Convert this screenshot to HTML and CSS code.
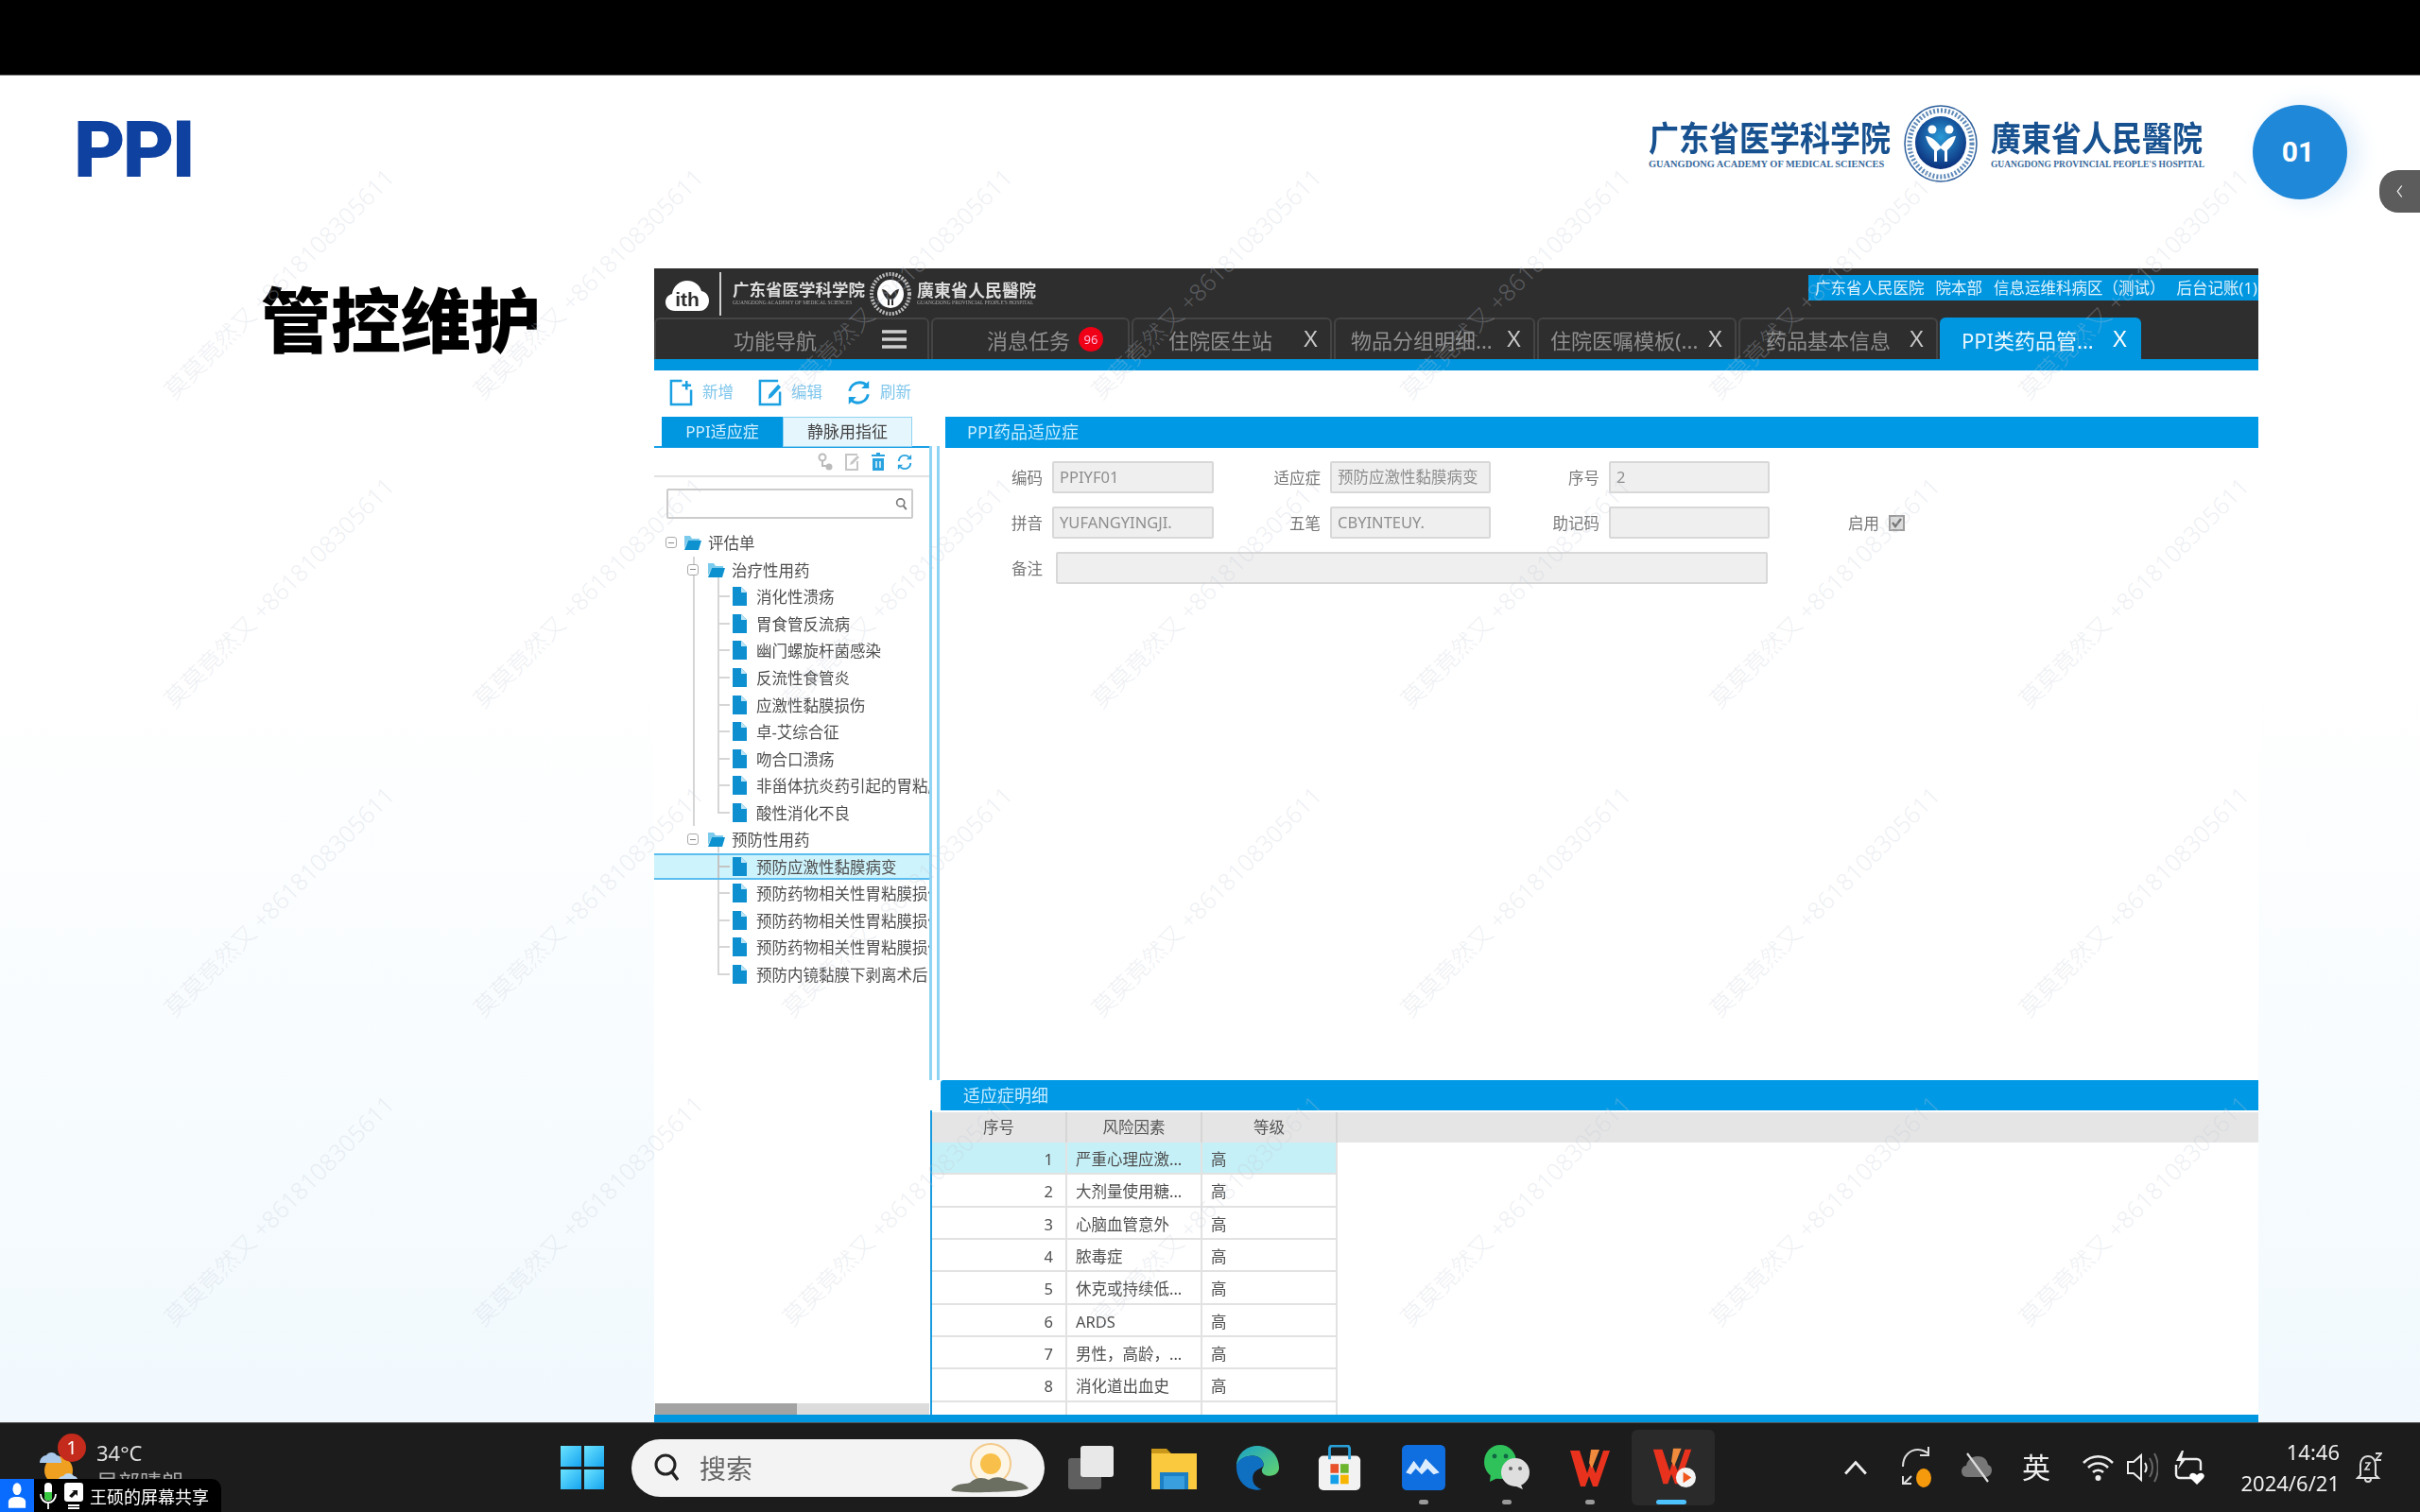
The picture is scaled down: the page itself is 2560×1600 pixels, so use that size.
FILE: index.html
```html
<!DOCTYPE html>
<html lang="zh-CN">
  <head>
    <meta charset="UTF-8" />
    <title>PPI 管控维护</title>
    <link rel="stylesheet" href="styles.css">
  </head>
  <body>
    <!-- 顶部黑边 -->
    <div class="topbar"></div>

    <!-- 幻灯片 -->
    <div class="slide">
      <div class="slide-head">
        <div class="ppi">PPI</div>
        <div class="hospital">
          <div class="hos-name">
            <div class="hos-cn">广东省医学科学院</div>
            <div class="hos-en">GUANGDONG ACADEMY OF MEDICAL SCIENCES</div>
          </div>
          <svg class="emblem" viewBox="0 0 80 84">
            <defs>
              <radialGradient id="emb" cx="50%" cy="40%" r="60%">
                <stop offset="0" stop-color="#2b9bd8" />
                <stop offset="1" stop-color="#0b2f7c" />
              </radialGradient>
            </defs>
            <ellipse cx="40" cy="42" rx="38" ry="40" fill="none" stroke="#2d5f9c" stroke-width="1.5" />
            <ellipse cx="40" cy="42" rx="33" ry="35" fill="none" stroke="#5f8ab8" stroke-width="5" stroke-dasharray="2 2" />
            <ellipse cx="40" cy="41" rx="27" ry="28" fill="url(#emb)" />
            <circle cx="31" cy="27" r="4.5" fill="#fff" />
            <circle cx="49" cy="27" r="4.5" fill="#fff" />
            <path d="M24 34c6 0 11 5 16 11 5-6 10-11 16-11-2 8-6 12-9 15v12h-3V50l-4-3-4 3v11h-3V49c-3-3-7-7-9-15z" fill="#fff" />
          </svg>
          <div class="hos-name">
            <div class="hos-cn hos-tc">廣東省人民醫院</div>
            <div class="hos-en hos-en2">GUANGDONG PROVINCIAL PEOPLE'S HOSPITAL</div>
          </div>
        </div>
        <div class="page-no">01</div>
      </div>

      <!-- 收起按钮 -->
      <div class="handle">
        <svg viewBox="0 0 12 20" width="9" height="15"><path d="M9 2L3 10l6 8" fill="none" stroke="#fff" stroke-width="1.6" /></svg>
      </div>

      <div class="slide-body">
        <div class="slide-title">管控维护</div>

        <!-- 系统截图 -->
        <div class="app">
          <div class="app-top">
            <div class="app-logo">
              <svg class="cloud" viewBox="0 0 46 34">
                <path d="M10 33C4 33 0 29 0 24c0-5 3-8 7-9 1-8 8-14 16-14 7 0 13 4 15 11 5 1 8 5 8 10 0 6-4 11-10 11z" fill="#fff" />
                <text x="23" y="28" text-anchor="middle" font-size="21" font-weight="700" font-family="Liberation Sans" fill="#2e2e2e">ith</text>
              </svg>
              <div class="logo-sep"></div>
              <div class="logo-name">
                <div class="logo-cn">广东省医学科学院</div>
                <div class="logo-en">GUANGDONG ACADEMY OF MEDICAL SCIENCES</div>
              </div>
              <svg class="logo-emb" viewBox="0 0 44 46">
                <ellipse cx="22" cy="23" rx="20" ry="21" fill="none" stroke="#bbb" stroke-width="4" stroke-dasharray="2 1.5" />
                <ellipse cx="22" cy="23" rx="14" ry="15" fill="#fff" />
                <path d="M13 18c4 0 7 4 9 7 2-3 5-7 9-7-1 6-4 9-6 11v6h-2v-6l-1-1-1 1v6h-2v-6c-2-2-5-5-6-11z" fill="#2e2e2e" />
              </svg>
              <div class="logo-name">
                <div class="logo-cn logo-tc">廣東省人民醫院</div>
                <div class="logo-en">GUANGDONG PROVINCIAL PEOPLE'S HOSPITAL</div>
              </div>
            </div>
            <div class="app-user">
              <span>广东省人民医院</span><span>院本部</span><span>信息运维科病区（测试）</span><span>后台记账(1)</span>
            </div>
          </div>

          <div class="tabs">
            <div class="tab tab-nav">
              <span>功能导航</span>
              <svg class="burger" viewBox="0 0 26 20"><path d="M0 2h26M0 10h26M0 18h26" stroke="#cfcfcf" stroke-width="3.4" /></svg>
            </div>
            <div class="tab tab-msg"><span>消息任务</span><span class="badge">96</span></div>
            <div class="tab tab-doc"><span>住院医生站</span><span class="close">X</span></div>
            <div class="tab tab-goods"><span>物品分组明细...</span><span class="close">X</span></div>
            <div class="tab tab-tpl"><span>住院医嘱模板(...</span><span class="close">X</span></div>
            <div class="tab tab-drug"><span>药品基本信息</span><span class="close">X</span></div>
            <div class="tab tab-ppi on"><span>PPI类药品管...</span><span class="close">X</span></div>
          </div>
          <div class="app-line"></div>

          <div class="toolbar">
            <div class="tool">
              <svg viewBox="0 0 26 30"><path d="M14 2H2v26h22V12M19 2v10M14 7h10" fill="none" stroke="#1ba0e2" stroke-width="2.6" /></svg>
              <span>新增</span>
            </div>
            <div class="tool">
              <svg viewBox="0 0 26 30"><path d="M22 2H2v26h22V14" fill="none" stroke="#1ba0e2" stroke-width="2.6" /><path d="M11 22l1-5 10-11 3 3-10 11z" fill="#1ba0e2" /></svg>
              <span>编辑</span>
            </div>
            <div class="tool">
              <svg viewBox="0 0 28 30"><path d="M3 13C4 7 9 3 15 3c3 0 6 1 8 3M25 17c-1 6-6 10-12 10-3 0-6-1-8-3" fill="none" stroke="#1ba0e2" stroke-width="3.2" /><path d="M26 1v9h-9zM2 29v-9h9z" fill="#1ba0e2" /></svg>
              <span>刷新</span>
            </div>
          </div>

          <div class="main">
            <!-- 左侧树 -->
            <div class="left">
              <div class="left-tabs">
                <div class="ltab on">PPI适应症</div>
                <div class="ltab">静脉用指征</div>
              </div>
              <div class="tree-tools">
                <svg viewBox="0 0 16 20"><circle cx="5" cy="5" r="3.5" fill="none" stroke="#bbb" stroke-width="2" /><path d="M5 9v5h5" fill="none" stroke="#bbb" stroke-width="2" /><circle cx="12" cy="15" r="3.5" fill="#bbb" /></svg>
                <svg viewBox="0 0 16 20"><path d="M14 2H2v16h12V9" fill="none" stroke="#c6c6c6" stroke-width="2" /><path d="M6 13l1-3 7-7 2 2-7 7z" fill="#c6c6c6" /></svg>
                <svg viewBox="0 0 16 20"><path d="M2 6h12v13H2z" fill="#29a3df" /><path d="M1 3h14M6 1h4" stroke="#29a3df" stroke-width="2" /><path d="M6 9v7M10 9v7" stroke="#fff" stroke-width="1.4" /></svg>
                <svg viewBox="0 0 18 20"><path d="M2 9c0-4 3-7 7-7 2 0 3.500.5 5 2M16 11c0 4-3 7-7 7-2 0-3.500-.5-5-2" fill="none" stroke="#29a3df" stroke-width="2.2" /><path d="M17 1v6h-6zM1 19v-6h6z" fill="#29a3df" /></svg>
              </div>
              <div class="tree-search">
                <svg viewBox="0 0 16 18" width="13" height="15"><circle cx="7" cy="7" r="5" fill="none" stroke="#777" stroke-width="2" /><path d="M10.500 11l4 5" stroke="#777" stroke-width="2.4" /></svg>
              </div>
              <div class="tree">
                <div class="row r0"><i class="exp"></i><svg class="folder" viewBox="0 0 18 18"><path d="M0 2h6l2 3h8v2H4L0 15z" fill="#7ccbec" /><path d="M4 7h14l-3 10H0z" fill="#0e92cf" /></svg><span>评估单</span></div>
                <div class="row r1 trunk"><i class="exp"></i><svg class="folder" viewBox="0 0 18 18"><path d="M0 2h6l2 3h8v2H4L0 15z" fill="#7ccbec" /><path d="M4 7h14l-3 10H0z" fill="#0e92cf" /></svg><span>治疗性用药</span></div>
                <div class="row r2 trunk"><svg class="file" viewBox="0 0 15 20"><path d="M0 0h9l6 6v14H0z" fill="#0e8fd0" /><path d="M9 0l6 6H9z" fill="#bfe6f7" /></svg><span>消化性溃疡</span></div>
                <div class="row r2 trunk"><svg class="file" viewBox="0 0 15 20"><path d="M0 0h9l6 6v14H0z" fill="#0e8fd0" /><path d="M9 0l6 6H9z" fill="#bfe6f7" /></svg><span>胃食管反流病</span></div>
                <div class="row r2 trunk"><svg class="file" viewBox="0 0 15 20"><path d="M0 0h9l6 6v14H0z" fill="#0e8fd0" /><path d="M9 0l6 6H9z" fill="#bfe6f7" /></svg><span>幽门螺旋杆菌感染</span></div>
                <div class="row r2 trunk"><svg class="file" viewBox="0 0 15 20"><path d="M0 0h9l6 6v14H0z" fill="#0e8fd0" /><path d="M9 0l6 6H9z" fill="#bfe6f7" /></svg><span>反流性食管炎</span></div>
                <div class="row r2 trunk"><svg class="file" viewBox="0 0 15 20"><path d="M0 0h9l6 6v14H0z" fill="#0e8fd0" /><path d="M9 0l6 6H9z" fill="#bfe6f7" /></svg><span>应激性黏膜损伤</span></div>
                <div class="row r2 trunk"><svg class="file" viewBox="0 0 15 20"><path d="M0 0h9l6 6v14H0z" fill="#0e8fd0" /><path d="M9 0l6 6H9z" fill="#bfe6f7" /></svg><span>卓-艾综合征</span></div>
                <div class="row r2 trunk"><svg class="file" viewBox="0 0 15 20"><path d="M0 0h9l6 6v14H0z" fill="#0e8fd0" /><path d="M9 0l6 6H9z" fill="#bfe6f7" /></svg><span>吻合口溃疡</span></div>
                <div class="row r2 trunk"><svg class="file" viewBox="0 0 15 20"><path d="M0 0h9l6 6v14H0z" fill="#0e8fd0" /><path d="M9 0l6 6H9z" fill="#bfe6f7" /></svg><span>非甾体抗炎药引起的胃粘膜损伤</span></div>
                <div class="row r2 trunk last"><svg class="file" viewBox="0 0 15 20"><path d="M0 0h9l6 6v14H0z" fill="#0e8fd0" /><path d="M9 0l6 6H9z" fill="#bfe6f7" /></svg><span>酸性消化不良</span></div>
                <div class="row r1"><i class="exp"></i><svg class="folder" viewBox="0 0 18 18"><path d="M0 2h6l2 3h8v2H4L0 15z" fill="#7ccbec" /><path d="M4 7h14l-3 10H0z" fill="#0e92cf" /></svg><span>预防性用药</span></div>
                <div class="row r2 sel"><svg class="file" viewBox="0 0 15 20"><path d="M0 0h9l6 6v14H0z" fill="#0e8fd0" /><path d="M9 0l6 6H9z" fill="#bfe6f7" /></svg><span>预防应激性黏膜病变</span></div>
                <div class="row r2"><svg class="file" viewBox="0 0 15 20"><path d="M0 0h9l6 6v14H0z" fill="#0e8fd0" /><path d="M9 0l6 6H9z" fill="#bfe6f7" /></svg><span>预防药物相关性胃粘膜损伤</span></div>
                <div class="row r2"><svg class="file" viewBox="0 0 15 20"><path d="M0 0h9l6 6v14H0z" fill="#0e8fd0" /><path d="M9 0l6 6H9z" fill="#bfe6f7" /></svg><span>预防药物相关性胃粘膜损伤</span></div>
                <div class="row r2"><svg class="file" viewBox="0 0 15 20"><path d="M0 0h9l6 6v14H0z" fill="#0e8fd0" /><path d="M9 0l6 6H9z" fill="#bfe6f7" /></svg><span>预防药物相关性胃粘膜损伤</span></div>
                <div class="row r2 last"><svg class="file" viewBox="0 0 15 20"><path d="M0 0h9l6 6v14H0z" fill="#0e8fd0" /><path d="M9 0l6 6H9z" fill="#bfe6f7" /></svg><span>预防内镜黏膜下剥离术后</span></div>
              </div>
              <div class="hscroll"><div class="hthumb"></div></div>
            </div>

            <!-- 右侧 -->
            <div class="right">
              <div class="right-top">
                <div class="sash"></div>
                <div class="panel">
                  <div class="panel-bar">PPI药品适应症</div>
                  <div class="form">
                    <label>编码</label><div class="inp">PPIYF01</div>
                    <label>适应症</label><div class="inp">预防应激性黏膜病变</div>
                    <label>序号</label><div class="inp">2</div>
                    <div></div><div></div>
                    <label>拼音</label><div class="inp">YUFANGYINGJI.</div>
                    <label>五笔</label><div class="inp">CBYINTEUY.</div>
                    <label>助记码</label><div class="inp"></div>
                    <label>启用</label>
                    <svg class="check" viewBox="0 0 17 17"><rect width="17" height="17" fill="#9c9c9c" /><rect x="2" y="2" width="13" height="13" fill="#dcdcdc" /><path d="M4 8l3 4 6-8" fill="none" stroke="#777" stroke-width="2.4" /></svg>
                    <label>备注</label><div class="inp wide"></div>
                  </div>
                </div>
              </div>
              <div class="right-bot">
                <div class="bot-bar">适应症明细</div>
                <div class="grid-wrap">
                  <div class="grid-head"><div>序号</div><div>风险因素</div><div>等级</div></div>
                  <div class="grid-row on"><div class="num">1</div><div>严重心理应激...</div><div>高</div></div>
                  <div class="grid-row"><div class="num">2</div><div>大剂量使用糖...</div><div>高</div></div>
                  <div class="grid-row"><div class="num">3</div><div>心脑血管意外</div><div>高</div></div>
                  <div class="grid-row"><div class="num">4</div><div>脓毒症</div><div>高</div></div>
                  <div class="grid-row"><div class="num">5</div><div>休克或持续低...</div><div>高</div></div>
                  <div class="grid-row"><div class="num">6</div><div>ARDS</div><div>高</div></div>
                  <div class="grid-row"><div class="num">7</div><div>男性，高龄，...</div><div>高</div></div>
                  <div class="grid-row"><div class="num">8</div><div>消化道出血史</div><div>高</div></div>
                  <div class="grid-row"><div class="num"></div><div></div><div></div></div>
                </div>
              </div>
            </div>
          </div>
          <div class="app-foot"></div>
        </div>
      </div>

      <!-- 水印 -->
      <div class="marks">
        <span>莫莫竟然又 +8618108305611</span><span>莫莫竟然又 +8618108305611</span><span>莫莫竟然又 +8618108305611</span><span>莫莫竟然又 +8618108305611</span><span>莫莫竟然又 +8618108305611</span><span>莫莫竟然又 +8618108305611</span><span>莫莫竟然又 +8618108305611</span>
        <span>莫莫竟然又 +8618108305611</span><span>莫莫竟然又 +8618108305611</span><span>莫莫竟然又 +8618108305611</span><span>莫莫竟然又 +8618108305611</span><span>莫莫竟然又 +8618108305611</span><span>莫莫竟然又 +8618108305611</span><span>莫莫竟然又 +8618108305611</span>
        <span>莫莫竟然又 +8618108305611</span><span>莫莫竟然又 +8618108305611</span><span>莫莫竟然又 +8618108305611</span><span>莫莫竟然又 +8618108305611</span><span>莫莫竟然又 +8618108305611</span><span>莫莫竟然又 +8618108305611</span><span>莫莫竟然又 +8618108305611</span>
        <span>莫莫竟然又 +8618108305611</span><span>莫莫竟然又 +8618108305611</span><span>莫莫竟然又 +8618108305611</span><span>莫莫竟然又 +8618108305611</span><span>莫莫竟然又 +8618108305611</span><span>莫莫竟然又 +8618108305611</span><span>莫莫竟然又 +8618108305611</span>
      </div>
    </div>

    <!-- 任务栏 -->
    <div class="taskbar">
      <div class="weather">
        <svg class="wx" viewBox="0 0 46 56">
          <circle cx="24" cy="32" r="15" fill="#f0a020" />
          <path d="M4 24c0-5 4-8 7-8 2-4 9-4 11 0 3 0 5 3 5 8z" fill="#a9c8ea" />
          <path d="M22 46c0-5 4-8 7-8 2-4 9-4 11 0 3 0 5 3 5 8z" fill="#bcd6f0" />
        </svg>
        <div class="wx-text">
          <div>34°C</div>
          <div class="wx-sub">局部晴朗</div>
        </div>
        <div class="wx-badge">1</div>
      </div>
      <div class="win-slot">
        <div class="win-logo"><i></i><i></i><i></i><i></i></div>
      </div>
      <div class="search">
        <svg class="search-ico" viewBox="0 0 26 30"><circle cx="12" cy="12" r="10" fill="none" stroke="#222" stroke-width="3" /><path d="M19 20l6 8" stroke="#222" stroke-width="3.500" /></svg>
        <span>搜索</span>
        <svg class="search-pic" viewBox="0 0 88 56">
          <circle cx="44" cy="24" r="21" fill="#fdf6e6" stroke="#f3c98a" stroke-width="2" />
          <circle cx="44" cy="24" r="11" fill="#f8c04a" />
          <path d="M2 52c6-8 14-6 20-8 6-6 14-6 20-3 8-5 16-2 20 1 8 0 18 2 22 8-8 4-74 6-82 2z" fill="#6b6f62" />
        </svg>
      </div>
      <div class="apps">
        <div class="app-slot">
          <svg viewBox="0 0 48 46"><rect y="13" width="35" height="33" rx="3" fill="#5f5f5f" /><rect x="13" width="35" height="33" rx="3" fill="#e8e8e8" /></svg>
        </div>
        <div class="app-slot">
          <svg viewBox="0 0 48 46"><path d="M0 3h16l5 5h27v38H0z" fill="#c9981a" /><path d="M0 8h48v38H0z" fill="#fbc93d" /><path d="M9 28h30v18H9z" fill="#1d7fc4" /><path d="M13 32h22v14H13z" fill="#3a9fdf" /></svg>
        </div>
        <div class="app-slot">
          <svg viewBox="0 0 48 50">
            <defs>
              <linearGradient id="edgeA" x1="0" y1="0" x2="1" y2="1"><stop offset="0" stop-color="#1aa1c9" /><stop offset="1" stop-color="#62d36c" /></linearGradient>
            </defs>
            <path d="M24 1c13 0 24 10 24 24 0 6-5 9-10 9-5 0-9-2-9-6 0-2 2-3 2-6 0-5-5-10-12-10C10 12 3 17 1 24 1 11 11 1 24 1z" fill="url(#edgeA)" />
            <path d="M1 24c0-7 8-12 18-12 7 0 12 5 12 10 0 2-2 3-4 4-5 2-8 5-8 11 0 6 4 10 10 12-4 1-7 1-10 0C8 47 1 36 1 24z" fill="#0f6fc0" />
          </svg>
        </div>
        <div class="app-slot">
          <svg viewBox="0 0 48 50"><rect y="12" width="46" height="38" rx="5" fill="#f2f2f2" /><path d="M12 16V4a3 3 0 0 1 3-3h16a3 3 0 0 1 3 3v12" fill="none" stroke="#2a9fd8" stroke-width="3" /><rect x="13" y="21" width="9" height="10" fill="#e8512a" /><rect x="24" y="21" width="9" height="10" fill="#6cb52d" /><rect x="13" y="33" width="9" height="10" fill="#14a0e8" /><rect x="24" y="33" width="9" height="10" fill="#f7b500" /></svg>
        </div>
        <div class="app-slot">
          <svg viewBox="0 0 44 46"><rect width="44" height="46" rx="5" fill="#106fe0" /><path d="M4 28l8-12 6 8 6-10 14 14-6 2-6-6-6 6-6-6-5 6z" fill="#dcecff" /></svg>
          <i class="dot"></i>
        </div>
        <div class="app-slot">
          <svg viewBox="0 0 48 48"><ellipse cx="17" cy="18" rx="17" ry="18" fill="#2fc25b" /><path d="M7 30l-1 9 10-5z" fill="#2fc25b" /><circle cx="11" cy="12" r="2.400" fill="#164" /><circle cx="23" cy="12" r="2.400" fill="#164" /><ellipse cx="33" cy="29" rx="15" ry="15" fill="#dedede" /><path d="M38 40l3 7-9-4z" fill="#dedede" /><circle cx="28" cy="25" r="2" fill="#666" /><circle cx="38" cy="25" r="2" fill="#666" /></svg>
          <i class="dot"></i>
        </div>
        <div class="app-slot">
          <svg viewBox="0 0 48 44"><path d="M3 4h10l8 24 4-12 5 12 8-24h7L32 42h-5l-4-11-4 11h-5z" fill="#e8321d" /><path d="M25 3h9l-8 20-3-6z" fill="#f08a3c" /></svg>
          <i class="dot"></i>
        </div>
        <div class="app-slot active">
          <svg viewBox="0 0 50 48"><path d="M3 4h10l8 24 4-12 5 12 8-24h7L32 42h-5l-4-11-4 11h-5z" fill="#e8321d" /><path d="M25 3h9l-8 20-3-6z" fill="#f08a3c" /><circle cx="39" cy="35" r="11" fill="#f4f4f4" /><path d="M36 29l9 6-9 6z" fill="#f0561d" /></svg>
          <i class="dot cur"></i>
        </div>
      </div>
      <div class="tray">
        <svg class="t-chev" viewBox="0 0 24 16"><path d="M2 14L12 3l10 11" fill="none" stroke="#eee" stroke-width="2.600" /></svg>
        <svg class="t-sync" viewBox="0 0 32 46"><path d="M2 22C2 10 10 4 18 4c4 0 8 2 11 4M2 32v8h9M3 40l8-8" fill="none" stroke="#ddd" stroke-width="2" /><path d="M29 1v9h-9" fill="none" stroke="#ddd" stroke-width="2" /><ellipse cx="24" cy="34" rx="8" ry="10" fill="#f59a0c" /></svg>
        <svg class="t-cloud" viewBox="0 0 32 32"><path d="M6 26C2 26 0 23 0 20s2-6 5-6c1-6 6-10 12-10s10 3 11 9c3 1 4 3 4 6 0 4-3 7-7 7z" fill="#777" /><path d="M6 1l22 30" stroke="#ddd" stroke-width="2.200" /></svg>
        <div class="t-lang">英</div>
        <svg class="t-wifi" viewBox="0 0 33 32"><path d="M1 11c9-9 22-9 31 0M6 16c6-6 15-6 21 0M11 21c3-3 8-3 11 0" fill="none" stroke="#eee" stroke-width="2.600" /><circle cx="16.500" cy="27" r="3" fill="#eee" /></svg>
        <svg class="t-vol" viewBox="0 0 33 36"><path d="M1 12h6l8-7v26l-8-7H1z" fill="none" stroke="#eee" stroke-width="2" /><path d="M19 13c2 3 2 7 0 10" fill="none" stroke="#eee" stroke-width="2" /><path d="M24 8c4 6 4 14 0 20M29 3c5 9 5 21 0 30" fill="none" stroke="#666" stroke-width="2" /></svg>
        <svg class="t-batt" viewBox="0 0 34 38"><path d="M8 10h18a4 4 0 0 1 4 4v8M26 30H8a4 4 0 0 1-4-4V16" fill="none" stroke="#eee" stroke-width="2.400" /><path d="M10 1L4 12h5l-3 9 9-12h-5l2-8z" fill="#eee" /><path d="M26 37l-7-7c-3-4 3-8 7-3 4-5 10-1 7 3z" fill="#fff" /></svg>
        <div class="clock"><div>14:46</div><div>2024/6/21</div></div>
        <svg class="t-bell" viewBox="0 0 29 34"><path d="M6 25V14c0-5 3-9 8-9s8 4 8 9v11l3 3H3z" fill="none" stroke="#ddd" stroke-width="2" /><path d="M11 29c0 4 6 4 6 0" fill="none" stroke="#ddd" stroke-width="2" /><path d="M11 12h5l-5 7h5" fill="none" stroke="#ddd" stroke-width="1.600" /><path d="M22 2h6l-6 7h6" fill="none" stroke="#ddd" stroke-width="1.800" /></svg>
      </div>

      <!-- 屏幕共享条 -->
      <div class="share">
        <div class="share-user">
          <svg viewBox="0 0 22 32" width="20" height="30"><ellipse cx="11" cy="8" rx="5" ry="7" fill="#fff" /><path d="M1 30v-7c0-4 4-6 10-6s10 2 10 6v7z" fill="#fff" /></svg>
        </div>
        <svg class="share-mic" viewBox="0 0 20 30"><rect x="6" y="1" width="8" height="19" rx="4" fill="#fff" /><path d="M6 11h8v5a4 4 0 0 1-8 0z" fill="#38c940" /><path d="M2 13c0 12 16 12 16 0M10 23v6" fill="none" stroke="#fff" stroke-width="1.800" /></svg>
        <svg class="share-scr" viewBox="0 0 22 30"><rect x="1" y="1" width="20" height="20" rx="3" fill="#fff" /><path d="M6 15l5-5-2-1h6v6l-2-2-4 4z" fill="#111" /><path d="M5 25h12M5 28h12" stroke="#fff" stroke-width="2" /></svg>
        <span>王硕的屏幕共享</span>
      </div>
    </div>
  </body>
</html>
```

FILE: styles.css
```css
* {
  margin: 0;
  padding: 0;
  box-sizing: border-box;
}

body {
  width: 2560px;
  height: 1600px;
  display: flex;
  flex-direction: column;
  overflow: hidden;
  background: #000;
  font-family: "Noto Sans", "Noto Sans CJK SC", sans-serif;
}

.topbar {
  height: 80px;
  background: #000;
  border-bottom: 1px solid #777;
}

/* 幻灯片 */
.slide {
  height: 1425px;
  position: relative;
  overflow: hidden;
  background: linear-gradient(#fff 45%, #f1f9fe 100%);
}

.slide-head {
  height: 204px;
  display: flex;
  align-items: flex-start;
  padding-left: 78px;
}

.ppi {
  margin-top: 38px;
  font-family: Roboto, sans-serif;
  font-size: 84px;
  line-height: 82px;
  font-weight: 900;
  letter-spacing: -3px;
  color: #0f41a0;
}

.hospital {
  margin-left: auto;
  margin-top: 30px;
  display: flex;
  align-items: center;
}

.hos-cn {
  font-family: "Noto Sans CJK SC", sans-serif;
  font-size: 32px;
  line-height: 40px;
  font-weight: 700;
  color: #17518f;
  white-space: nowrap;
  transform: scaleY(1.15);
}

.hos-tc {
  font-family: "Noto Sans CJK TC", sans-serif;
  letter-spacing: 0;
}

.hos-en {
  margin-top: 4px;
  font-family: "Liberation Serif", serif;
  font-size: 10.400px;
  line-height: 12px;
  font-weight: 700;
  color: #3a6a9c;
  white-space: nowrap;
}

.hos-en2 {
  font-size: 9.500px;
}

.emblem {
  width: 80px;
  height: 84px;
  margin: 0 13px;
}

.page-no {
  width: 100px;
  height: 100px;
  margin: 31px 77px 0 51px;
  border-radius: 50%;
  background: #2088d8;
  box-shadow: 10px 0 26px #dcecfb;
  color: #fff;
  font-family: Roboto, sans-serif;
  font-size: 30px;
  font-weight: 700;
  line-height: 100px;
  text-indent: -4px;
  text-align: center;
}

.handle {
  position: absolute;
  right: 0;
  top: 100px;
  width: 43px;
  height: 45px;
  background: #5c5c5c;
  border-radius: 20px 0 0 20px;
  display: flex;
  align-items: center;
  justify-content: center;
}

.slide-body {
  height: 1221px;
  display: flex;
}

.slide-title {
  width: 692px;
  padding: 7px 0 0 276px;
  font-family: "Noto Sans CJK SC", sans-serif;
  font-size: 74px;
  line-height: 88px;
  font-weight: 900;
  color: #000;
}

/* 系统截图 */
.app {
  width: 1697px;
  height: 1221px;
  display: flex;
  flex-direction: column;
  background: #fff;
  filter: blur(0.7px);
}

.app-top {
  height: 52px;
  background: #2e2e2e;
  display: flex;
  align-items: flex-start;
  justify-content: space-between;
}

.app-logo {
  display: flex;
  align-items: flex-start;
  padding: 12px 0 0 12px;
  color: #ddd;
}

.cloud {
  width: 46px;
  height: 34px;
}

.logo-sep {
  width: 2px;
  height: 46px;
  margin: -8px 12px 0 11px;
  background: #cfcfcf;
}

.logo-name {
  width: 140px;
}

.logo-cn {
  font-family: "Noto Sans CJK SC", sans-serif;
  font-size: 17.500px;
  line-height: 20px;
  font-weight: 700;
  white-space: nowrap;
}

.logo-tc {
  font-family: "Noto Sans CJK TC", sans-serif;
  font-size: 18px;
}

.logo-en {
  font-family: "Liberation Serif", serif;
  font-size: 5.500px;
  line-height: 8px;
  color: #aaa;
  white-space: nowrap;
  overflow: hidden;
}

.logo-emb {
  width: 44px;
  height: 46px;
  margin: -8px 6px 0 5px;
}

.app-user {
  width: 476px;
  height: 27px;
  margin-top: 7px;
  padding-left: 7px;
  background: #0096e0;
  color: #dff3fd;
  font-size: 16.500px;
  line-height: 27px;
  display: flex;
  gap: 12px;
  white-space: nowrap;
  overflow: hidden;
}

.tabs {
  height: 44px;
  background: #2e2e2e;
  display: flex;
  gap: 2px;
  color: #8f8f8f;
  font-size: 22px;
}

.tab {
  height: 44px;
  border: 2px solid #444;
  border-bottom: 0;
  border-radius: 6px 6px 0 0;
  display: flex;
  align-items: center;
  white-space: nowrap;
}

.close {
  margin-left: auto;
  font-family: "Liberation Sans", sans-serif;
  font-size: 23px;
  color: #c8c8c8;
}

.tab-nav {
  width: 291px;
  padding-left: 82px;
}

.burger {
  width: 26px;
  height: 20px;
  margin-left: 69px;
}

.tab-msg {
  width: 210px;
  padding-left: 57px;
}

.badge {
  width: 26px;
  height: 26px;
  margin-left: 9px;
  border-radius: 50%;
  background: #f00016;
  color: #fbd;
  font-size: 13px;
  line-height: 26px;
  text-align: center;
}

.tab-doc {
  width: 212px;
  padding: 0 13px 0 37px;
}

.tab-goods {
  width: 213px;
  padding: 0 13px 0 16px;
}

.tab-tpl {
  width: 211px;
  padding: 0 13px 0 12px;
}

.tab-drug {
  width: 211px;
  padding: 0 13px 0 27px;
}

.tab-ppi {
  width: 213px;
  padding: 0 13px 0 21px;
}

.tab.on {
  background: #0096e0;
  border-color: #0096e0;
  color: #e8f7ff;
}

.tab.on .close {
  color: #fff;
}

.app-line {
  height: 12px;
  background: #0096e0;
}

.toolbar {
  height: 49px;
  padding: 9px 0 0 16px;
  display: flex;
  color: #7fc6ec;
  font-size: 16.500px;
}

.tool {
  display: flex;
  align-items: flex-start;
  width: 94px;
  line-height: 28px;
}

.tool svg {
  width: 25px;
  height: 29px;
  margin-right: 10px;
}

.main {
  flex: 1;
  display: flex;
  min-height: 0;
}

/* 左侧树 */
.left {
  width: 291px;
  display: flex;
  flex-direction: column;
}

.left-tabs {
  height: 33px;
  padding-left: 8px;
  display: flex;
  border-bottom: 2px solid #1aa0e6;
}

.ltab {
  width: 137px;
  height: 32px;
  background: #e6f6fd;
  border: 1px solid #8fd2f3;
  color: #444;
  font-size: 17px;
  line-height: 30px;
  text-align: center;
}

.ltab.on {
  width: 128px;
  background: #0096e0;
  border-color: #0096e0;
  color: #d4f0ff;
}

.tree-tools {
  height: 31px;
  padding: 5px 18px 0 0;
  display: flex;
  justify-content: flex-end;
  gap: 12px;
  border-bottom: 2px solid #e2e2e2;
}

.tree-tools svg {
  width: 16px;
  height: 20px;
}

.tree-search {
  height: 32px;
  margin: 12px 17px 0 13px;
  border: 2px solid #ccc;
  border-radius: 2px;
  display: flex;
  align-items: center;
  justify-content: flex-end;
  padding-right: 4px;
}

.tree {
  flex: 1;
  margin-top: 11px;
  overflow: hidden;
  color: #4f4f4f;
  font-size: 16.500px;
}

.row {
  height: 28.550px;
  display: flex;
  align-items: center;
  white-space: nowrap;
}

.row svg,
.row i {
  flex-shrink: 0;
}

.r0 {
  padding-left: 12px;
}

.r1 {
  padding-left: 35px;
  background: linear-gradient(#d6d6d6, #d6d6d6) 67px 100% / 2px 50% no-repeat;
}

.r2 {
  padding-left: 83px;
  background:
    linear-gradient(#d6d6d6, #d6d6d6) 67px 50% / 13px 2px no-repeat,
    linear-gradient(#d6d6d6, #d6d6d6) 67px 0 / 2px 100% no-repeat;
}

.r2.last {
  background:
    linear-gradient(#d6d6d6, #d6d6d6) 67px 50% / 13px 2px no-repeat,
    linear-gradient(#d6d6d6, #d6d6d6) 67px 0 / 2px 50% no-repeat;
}

.r2.trunk {
  background:
    linear-gradient(#d6d6d6, #d6d6d6) 41px 0 / 2px 100% no-repeat,
    linear-gradient(#d6d6d6, #d6d6d6) 67px 50% / 13px 2px no-repeat,
    linear-gradient(#d6d6d6, #d6d6d6) 67px 0 / 2px 100% no-repeat;
}

.r1.trunk {
  background:
    linear-gradient(#d6d6d6, #d6d6d6) 41px 0 / 2px 100% no-repeat,
    linear-gradient(#d6d6d6, #d6d6d6) 67px 100% / 2px 50% no-repeat;
}

.r2.trunk.last {
  background:
    linear-gradient(#d6d6d6, #d6d6d6) 41px 0 / 2px 100% no-repeat,
    linear-gradient(#d6d6d6, #d6d6d6) 67px 50% / 13px 2px no-repeat,
    linear-gradient(#d6d6d6, #d6d6d6) 67px 0 / 2px 50% no-repeat;
}

.r2.sel {
  background:
    linear-gradient(#c4c4c4, #c4c4c4) 67px 50% / 13px 2px no-repeat,
    linear-gradient(#c4c4c4, #c4c4c4) 67px 0 / 2px 100% no-repeat,
    #cdf3fc;
  border-top: 2px solid #5bbdf0;
  border-bottom: 2px solid #5bbdf0;
}

.exp {
  width: 12px;
  height: 12px;
  margin-right: 8px;
  border: 1px solid #aaa;
  border-radius: 3px;
  background: linear-gradient(#888, #888) 50% 50% / 6px 1px no-repeat, #fff;
}

.folder {
  width: 18px;
  height: 18px;
  margin-right: 7px;
}

.r1 .exp {
  margin-right: 10px;
}

.file {
  width: 15px;
  height: 20px;
  margin-right: 10px;
}

.hscroll {
  height: 12px;
  margin: 0 0 0 1px;
  background: #dcdcdc;
}

.hthumb {
  width: 150px;
  height: 12px;
  background: #a3a3a3;
}

/* 右侧 */
.right {
  flex: 1;
  display: flex;
  flex-direction: column;
  min-width: 0;
}

.right-top {
  height: 702px;
  display: flex;
}

.sash {
  width: 17px;
  margin-top: 31px;
  border-left: 3px solid #8fd4f5;
  background: linear-gradient(#8fd4f5, #8fd4f5) 5px 0 / 3px 100% no-repeat;
}

.panel {
  flex: 1;
}

.panel-bar {
  height: 33px;
  padding-left: 23px;
  background: #0099e5;
  color: #c8ecff;
  font-size: 18px;
  line-height: 33px;
}

.form {
  display: grid;
  grid-template-columns: 113px 171px 123px 170px 125px 170px 126px 17px;
  grid-auto-rows: 34px;
  row-gap: 14px;
  padding-top: 14px;
  align-items: center;
  color: #777;
  font-size: 16.500px;
}

.form label {
  padding-right: 10px;
  text-align: right;
}

.inp {
  height: 34px;
  padding-left: 6px;
  background: #efefef;
  border: 2px solid #d8d8d8;
  border-radius: 2px;
  color: #8e8e8e;
  line-height: 30px;
  white-space: nowrap;
  overflow: hidden;
}

.inp.wide {
  grid-column: 2 / 7;
  margin: 0 2px 0 4px;
}

.check {
  width: 17px;
  height: 17px;
}

.right-bot {
  flex: 1;
  display: flex;
  flex-direction: column;
  min-height: 0;
}

.bot-bar {
  height: 32px;
  margin-left: 12px;
  padding-left: 24px;
  background: #0099e5;
  border-radius: 3px 0 0 0;
  color: #c8ecff;
  font-size: 18px;
  line-height: 32px;
}

.grid-wrap {
  flex: 1;
  margin-left: 1px;
  padding-top: 2px;
  border-left: 2px solid #1a9be0;
  overflow: hidden;
  color: #4f4f4f;
  font-size: 16.500px;
}

.grid-head {
  height: 32px;
  background: #e5e5e5;
  display: grid;
  grid-template-columns: 143px 143px 143px;
  line-height: 32px;
  text-align: center;
  color: #555;
}

.grid-head div {
  border-right: 2px solid #d6d6d6;
}

.grid-row {
  width: 429px;
  height: 34.330px;
  display: grid;
  grid-template-columns: 143px 143px 143px;
  border-bottom: 2px solid #e2e2e2;
  line-height: 36px;
}

.grid-row div {
  padding-left: 9px;
  border-right: 2px solid #e2e2e2;
  white-space: nowrap;
  overflow: hidden;
}

.grid-row .num {
  padding: 0 13px 0 0;
  text-align: right;
}

.grid-row.on {
  background: #c5f0f7;
}

.app-foot {
  height: 8px;
  background: #0096e0;
}

/* 水印 */
.marks {
  position: absolute;
  left: 130px;
  top: 55px;
  display: grid;
  grid-template-columns: repeat(7, 327px);
  grid-auto-rows: 327px;
  pointer-events: none;
}

.marks span {
  display: flex;
  align-items: center;
  justify-content: center;
  white-space: nowrap;
  transform: rotate(-45deg);
  color: rgba(196, 202, 214, 0.3);
  font-size: 25px;
  font-weight: 300;
}

/* 任务栏 */
.taskbar {
  height: 95px;
  background: #1c1c1c;
  border-top: 1px solid #555;
  display: flex;
  align-items: center;
  position: relative;
  color: #eee;
  filter: blur(0.5px);
}

.weather {
  width: 572px;
  height: 94px;
  position: relative;
  display: flex;
  padding: 16px 0 0 38px;
}

.wx {
  width: 46px;
  height: 56px;
  margin-top: 2px;
}

.wx-text {
  margin-left: 18px;
  font-size: 22px;
  line-height: 30px;
  color: #ddd;
}

.wx-sub {
  margin-top: 1px;
  font-size: 23px;
  color: #aaa;
  white-space: nowrap;
}

.wx-badge {
  position: absolute;
  left: 61px;
  top: 11px;
  width: 30px;
  height: 30px;
  border-radius: 50%;
  background: #c42b1c;
  color: #fff;
  font-size: 20px;
  line-height: 30px;
  text-align: center;
}

.win-slot {
  width: 88px;
  display: flex;
  justify-content: center;
}

.win-logo {
  width: 46px;
  height: 46px;
  display: grid;
  grid-template-columns: 1fr 1fr;
  gap: 3px;
}

.win-logo i {
  background: linear-gradient(135deg, #6ce4ff, #15a4f0);
}

.search {
  width: 437px;
  height: 61px;
  margin: 0 5px 0 8px;
  padding: 0 13px 0 24px;
  background: #f3f3f3;
  border-radius: 31px;
  display: flex;
  align-items: center;
  color: #666;
  font-size: 28px;
}

.search-ico {
  width: 26px;
  height: 30px;
  margin-right: 22px;
}

.search-pic {
  width: 88px;
  height: 56px;
  margin-left: auto;
}

.apps {
  display: flex;
}

.app-slot {
  width: 88px;
  height: 80px;
  border-radius: 6px;
  position: relative;
  display: flex;
  align-items: center;
  justify-content: center;
}

.app-slot svg {
  width: 48px;
  height: 48px;
}

.app-slot.active {
  background: #2a2a2a;
}

.dot {
  position: absolute;
  left: 39px;
  bottom: 1px;
  width: 10px;
  height: 5px;
  border-radius: 3px;
  background: #9a9a9a;
}

.dot.cur {
  left: 26px;
  width: 32px;
  background: #4cc2ff;
}

.tray {
  margin-left: auto;
  padding-right: 40px;
  display: flex;
  align-items: center;
}

.t-chev { width: 26px; height: 18px; }
.t-sync { width: 32px; height: 46px; margin-left: 35px; }
.t-cloud { width: 32px; height: 32px; margin-left: 32px; }
.t-bell { width: 29px; height: 34px; margin-left: 16px; }
.t-wifi { width: 33px; height: 32px; margin-left: 34px; }
.t-vol { width: 33px; height: 36px; margin-left: 14px; }
.t-batt { width: 34px; height: 38px; margin-left: 15px; }

.t-lang {
  width: 30px;
  margin-left: 32px;
  font-size: 30px;
  line-height: 40px;
}

.clock {
  width: 112px;
  margin-left: 31px;
  text-align: right;
  font-size: 22px;
  line-height: 33px;
}

.share {
  position: absolute;
  left: 0;
  bottom: 0;
  width: 234px;
  height: 35px;
  background: #000;
  border-radius: 0 10px 0 0;
  display: flex;
  align-items: center;
  color: #fff;
  font-size: 18px;
  white-space: nowrap;
}

.share-user {
  width: 36px;
  height: 35px;
  background: #0a6cff;
  display: flex;
  align-items: center;
  justify-content: center;
}

.share-mic {
  width: 20px;
  height: 30px;
  margin-left: 5px;
}

.share-scr {
  width: 22px;
  height: 30px;
  margin: 0 6px;
}
```
